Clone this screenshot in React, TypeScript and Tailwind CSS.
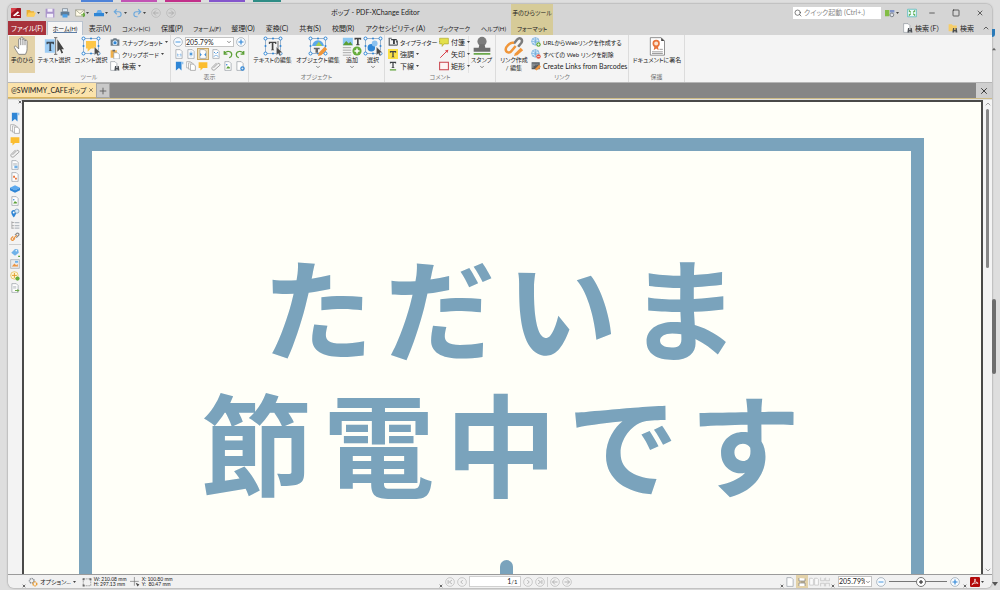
import React from "react";
import { ChevronDown, ChevronUp, Minus, Plus, Search, Square, X } from "lucide-react";

type Drawing = Record<string, React.ReactNode>;

const page = (
  <path d="M3 1h7l3 3v11H3z" fill="#fdfdfd" stroke="#8b949c" strokeWidth="1" />
);

const handles = (
  <>
    <rect x="3" y="3" width="18" height="18" fill="none" stroke="#8aa6c2" strokeWidth="1" />
    {[3, 21].map((x) =>
      [3, 21].map((y) => (
        <circle key={`${x}-${y}`} cx={x} cy={y} r="1.8" fill="#fff" stroke="#2f86d6" strokeWidth="1.2" />
      ))
    )}
    <circle cx="12" cy="3" r="1.2" fill="#2f86d6" />
    <circle cx="3" cy="12" r="1.2" fill="#2f86d6" />
    <circle cx="21" cy="12" r="1.2" fill="#2f86d6" />
    <circle cx="12" cy="21" r="1.2" fill="#2f86d6" />
  </>
);

const pointer = <path d="M16 13v10l2.4-2 1.6 3 1.8-.8-1.600-3 3.200-.4z" fill="#4a4a4a" stroke="#fff" strokeWidth=".5" />;

const small: Drawing = {
  app: (
    <>
      <rect width="16" height="16" rx="1" fill="#9e1623" />
      <path d="M0 0h10L0 9z" fill="#d8404a" />
      <path d="M3 12l8-7 2 2-7 6z" fill="#fff" />
      <path d="M9 12h5" stroke="#fff" strokeWidth="1.5" />
    </>
  ),
  folder: (
    <>
      <path d="M1 3h5l2 2h5v8H1z" fill="#e9ae33" />
      <path d="M4 7h12l-3 7H1z" fill="#fcce5c" />
    </>
  ),
  save: (
    <>
      <path d="M1 1h14v14H1z" fill="#a993cb" />
      <path d="M4 1h8v5H4zM3 9h10v6H3z" fill="#f3eefa" />
    </>
  ),
  print: (
    <>
      <path d="M4 1h8v5H4z" fill="#d9e9f7" stroke="#6b7780" />
      <path d="M1 6h14v6H1z" fill="#5f7c96" />
      <path d="M4 10h8v5H4z" fill="#4ea1e8" />
    </>
  ),
  mail: (
    <>
      <path d="M1 3h14v10H1z" fill="#fffbe8" stroke="#8d8d7a" />
      <path d="M1 3l7 6 7-6" fill="none" stroke="#8d8d7a" />
      <path d="M10 11h6M13 8l3 3-3 3" fill="none" stroke="#64a83a" strokeWidth="2" />
    </>
  ),
  scan: (
    <>
      <path d="M3 9l3-6h5l3 6z" fill="#6aaeea" />
      <path d="M0 8h16v5H0z" fill="#2f86d6" />
    </>
  ),
  undo: <path d="M6 2L2 6l4 4M2 6h7a4 4 0 010 8H7" fill="none" stroke="#6ea9dc" strokeWidth="1.8" />,
  redo: <path d="M10 2l4 4-4 4M14 6H7a4 4 0 000 8h2" fill="none" stroke="#6ea9dc" strokeWidth="1.8" />,
  back: (
    <>
      <circle cx="8" cy="8" r="7" fill="none" stroke="#b3b3b3" />
      <path d="M8 4L4 8l4 4M4 8h8" fill="none" stroke="#a6a6a6" strokeWidth="1.3" />
    </>
  ),
  forward: (
    <>
      <circle cx="8" cy="8" r="7" fill="none" stroke="#b3b3b3" />
      <path d="M8 4l4 4-4 4M12 8H4" fill="none" stroke="#a6a6a6" strokeWidth="1.3" />
    </>
  ),
  first: (
    <>
      <circle cx="8" cy="8" r="7" fill="none" stroke="#b3b3b3" />
      <path d="M11 5L7 8l4 3M5 5v6" fill="none" stroke="#a6a6a6" strokeWidth="1.3" />
    </>
  ),
  prev: (
    <>
      <circle cx="8" cy="8" r="7" fill="none" stroke="#b3b3b3" />
      <path d="M9 5L6 8l3 3" fill="none" stroke="#a6a6a6" strokeWidth="1.3" />
    </>
  ),
  next: (
    <>
      <circle cx="8" cy="8" r="7" fill="none" stroke="#b3b3b3" />
      <path d="M7 5l3 3-3 3" fill="none" stroke="#a6a6a6" strokeWidth="1.3" />
    </>
  ),
  last: (
    <>
      <circle cx="8" cy="8" r="7" fill="none" stroke="#b3b3b3" />
      <path d="M5 5l4 3-4 3M11 5v6" fill="none" stroke="#a6a6a6" strokeWidth="1.3" />
    </>
  ),
  zoomOut: (
    <>
      <circle cx="8" cy="8" r="7" fill="#f7fbff" stroke="#8c9aa6" />
      <path d="M4 8h8" stroke="#4d9be0" strokeWidth="1.6" />
    </>
  ),
  zoomIn: (
    <>
      <circle cx="8" cy="8" r="7" fill="#f7fbff" stroke="#8c9aa6" />
      <path d="M4 8h8M8 4v8" stroke="#2f86d6" strokeWidth="1.8" />
    </>
  ),
  camera: (
    <>
      <path d="M1 4h3l2-2h4l2 2h3v10H1z" fill="#6d7a85" />
      <circle cx="8" cy="9" r="4" fill="#cfe5f8" />
      <circle cx="8" cy="9" r="2.4" fill="#2f86d6" />
    </>
  ),
  clipboard: (
    <>
      <path d="M1 2h10v12H1z" fill="#efaf4a" />
      <path d="M4 1h4v3H4z" fill="#6b6b6b" />
      <path d="M6 6h6l3 3v7H6z" fill="#fff" stroke="#8b949c" />
    </>
  ),
  find: (
    <>
      <path d="M1 1h7l3 3v11H1z" fill="#fff" stroke="#8b949c" />
      <path d="M7 15l1-7h2v3h2V8h2l1 7h-3v-2h-2v2z" fill="#4b4f54" />
    </>
  ),
  findFolder: (
    <>
      <path d="M1 2h5l2 2h6v9H1z" fill="#f6cd67" />
      <path d="M7 15l1-7h2v3h2V8h2l1 7h-3v-2h-2v2z" fill="#4b4f54" />
    </>
  ),
  actual: (
    <>
      {page}
      <path d="M5 8h1v4M8 8v1M8 11v1M10 8h1v4" stroke="#4d9be0" fill="none" />
    </>
  ),
  fitPage: (
    <>
      {page}
      <path d="M8 4v8M5 8h6M6 6l4 4M10 6l-4 4" stroke="#2f86d6" />
    </>
  ),
  fitWidth: (
    <>
      {page}
      <path d="M5 9h1M10 9h1M4 7v4M12 7v4" stroke="#2f86d6" strokeWidth="1.4" />
    </>
  ),
  fitVisible: (
    <>
      {page}
      <path d="M5 5l2 2M11 5L9 7M5 12l2-2M11 12l-2-2" stroke="#2f86d6" strokeWidth="1.6" />
    </>
  ),
  rotateLeft: <path d="M2 3v5h5M2 8c3-6 12-5 12 1 0 3-2 4-4 5" fill="none" stroke="#5b9f35" strokeWidth="2" />,
  rotateRight: <path d="M14 3v5H9M14 8C11 2 2 3 2 9c0 3 2 4 4 5" fill="none" stroke="#5b9f35" strokeWidth="2" />,
  bookmark: (
    <>
      <path d="M3 1h9v14l-4-4-5 4z" fill="#2f86d6" />
      <path d="M12 1h3v4h-3z" fill="#8fc2ef" />
    </>
  ),
  pages: (
    <>
      <path d="M1 1h6l2 2v8H1z" fill="#fff" stroke="#9a9a9a" />
      <path d="M4 3h6l2 2v8H4z" fill="#fff" stroke="#9a9a9a" />
      <path d="M7 5h5l3 3v7H7z" fill="#fff" stroke="#8a8a8a" />
    </>
  ),
  note: <path d="M1 2h14v9H8l-4 4v-4H1z" fill="#fbbd2f" />,
  clip: (
    <path d="M4 11l7-7c2-1 4 1 3 3l-8 7c-3 2-6-1-4-4l7-7" fill="none" stroke="#979797" strokeWidth="1.4" />
  ),
  thumb: (
    <>
      {page}
      <path d="M5 12l3-4 2 2 1-1v3z" fill="#5b9f35" />
      <circle cx="6" cy="6" r="1.2" fill="#2f86d6" />
    </>
  ),
  pageGear: (
    <>
      {page}
      <circle cx="12" cy="12" r="2.6" fill="none" stroke="#2f86d6" strokeWidth="2" />
    </>
  ),
  fields: (
    <>
      {page}
      <path d="M5 6h6M5 8h6" stroke="#9aa3ab" />
      <path d="M7 9h5v4H7z" fill="#71b0e6" />
    </>
  ),
  signature: (
    <>
      {page}
      <path d="M5 6h3v3H5zM8 9h3v3H8z" fill="#e8743b" />
    </>
  ),
  layers: (
    <>
      <path d="M8 2l8 4-8 4-8-4z" fill="#5aa8ee" />
      <path d="M0 6v4l8 4 8-4V6l-8 4z" fill="#2f86d6" />
    </>
  ),
  pins: (
    <>
      <path d="M6 3a4 4 0 014 4c0 3-4 8-4 8S2 10 2 7a4 4 0 014-4z" fill="#2f86d6" />
      <circle cx="6" cy="7" r="1.6" fill="#fff" />
      <circle cx="11" cy="5" r="3.4" fill="#d6eafa" stroke="#5f86a8" />
    </>
  ),
  tree: (
    <>
      <path d="M3 2v12M3 4h4M3 9h4M3 13h4" stroke="#8b8b8b" fill="none" />
      <path d="M8 3h7v2H8zM8 8h7v2H8zM8 12h7v2H8z" fill="#b5bbc1" />
    </>
  ),
  chain: (
    <>
      <path d="M8 10l-3 3c-2 1-4-1-3-3l3-3" fill="none" stroke="#ec9440" strokeWidth="2" />
      <path d="M8 5l3-3c2-1 4 1 3 3l-4 4" fill="none" stroke="#8b8b8b" strokeWidth="2" />
      <path d="M5 11l6-6" stroke="#ec9440" strokeWidth="2" />
    </>
  ),
  tag: (
    <>
      <path d="M2 9l6-6 5 1 1 5-6 5z" fill="#6fb1e8" />
      <circle cx="10" cy="6" r="1.3" fill="#fff" />
      <path d="M13 14h3v2h-3z" fill="#5b9f35" />
    </>
  ),
  content: (
    <>
      <path d="M1 1h14v14H1z" fill="#e8eaec" stroke="#9da4aa" />
      <path d="M3 12l4-5 3 3 2-2 1 4z" fill="#ec9440" />
      <path d="M8 3h5v3H8z" fill="#6fb1e8" />
    </>
  ),
  addCircle: (
    <>
      <circle cx="7" cy="7" r="6" fill="#fff7d8" stroke="#e0b23a" />
      <path d="M7 3v8M3 7h8" stroke="#e09b2a" strokeWidth="1.5" />
      <circle cx="12" cy="12" r="3.4" fill="#67ad3d" />
    </>
  ),
  exportPage: (
    <>
      {page}
      <path d="M5 6h5M5 8h5" stroke="#9aa3ab" />
      <path d="M8 12h6M12 10l2 2-2 2" stroke="#5b9f35" strokeWidth="1.4" fill="none" />
    </>
  ),
  typewriter: (
    <>
      <path d="M1 2h2v10h12v2H1z" fill="#5c6166" />
      <path d="M5 3h9v2h-3v6H8V5H5z" fill="#3c4044" />
      <path d="M1 2h5M13 6h2v7" stroke="#5c6166" strokeWidth="1.5" />
    </>
  ),
  highlight: (
    <>
      <path d="M0 0h16v16H0z" fill="#fbe046" />
      <path d="M3 3h10v3h-1l-1-1H9v7l2 1H5l2-1V5H5L4 6H3z" fill="#3c4044" />
    </>
  ),
  underline: (
    <>
      <path d="M3 1h10v3h-1l-1-1H9v7l2 1H5l2-1V3H5L4 4H3z" fill="#3c4044" />
      <path d="M3 14h10" stroke="#5b9f35" strokeWidth="2" />
    </>
  ),
  sticky: <path d="M1 2h14v9H8l-3 4v-4H1z" fill="#e3e04a" stroke="#a8a42c" />,
  arrow: (
    <>
      <path d="M2 14L13 3" stroke="#d9404a" strokeWidth="1.6" />
      <path d="M15 1l-1.500 5.500-4-4z" fill="#d9404a" />
    </>
  ),
  rect: <rect x="1" y="2" width="14" height="12" fill="#fdf4f4" stroke="#c9404a" strokeWidth="1.6" />,
  globeAdd: (
    <>
      <circle cx="7" cy="7" r="6" fill="#e3f1fc" stroke="#5c9fd6" />
      <path d="M1 7h12M7 1v12M3 3c3 3 6 3 8 0M3 11c3-3 6-3 8 0" fill="none" stroke="#5c9fd6" />
      <circle cx="12" cy="12" r="3.6" fill="#67ad3d" />
      <path d="M10 12h4M12 10v4" stroke="#fff" />
    </>
  ),
  globeDel: (
    <>
      <circle cx="7" cy="7" r="6" fill="#e3f1fc" stroke="#5c9fd6" />
      <path d="M1 7h12M7 1v12M3 3c3 3 6 3 8 0M3 11c3-3 6-3 8 0" fill="none" stroke="#5c9fd6" />
      <circle cx="12" cy="12" r="3.6" fill="#e35a4a" />
      <path d="M10 12h4" stroke="#fff" />
    </>
  ),
  barcode: (
    <>
      <path d="M1 2h13v11H1z" fill="#565b60" />
      <path d="M3 4v7M5 4v4M8 4v3M11 4v2" stroke="#cfd4d8" />
      <path d="M6 13l7-7 3 3-7 6z" fill="#ec9440" />
    </>
  ),
  uiOptions: (
    <>
      <path d="M0 3h7v10H0z" fill="#83bd45" />
      <path d="M8 3h7v4H8z" fill="#7f93c9" />
      <circle cx="11" cy="11" r="3" fill="#dfe3ea" stroke="#7a7f86" strokeWidth="1.5" />
    </>
  ),
  fullScreen: (
    <>
      <path d="M1 2h14v12H1z" fill="#eafafa" stroke="#35b0b0" />
      <path d="M3 4l3 3M13 4l-3 3M3 12l3-3M13 12l-3-3" stroke="#55a845" strokeWidth="2" />
    </>
  ),
  gears: (
    <>
      <circle cx="6" cy="6" r="3.6" fill="none" stroke="#8a8f94" strokeWidth="2.4" strokeDasharray="2 1" />
      <circle cx="11" cy="11" r="3" fill="none" stroke="#ec9f36" strokeWidth="2.4" strokeDasharray="2 1" />
    </>
  ),
  dims: (
    <>
      <path d="M2 3h12v11H2z" fill="none" stroke="#7a7a7a" strokeDasharray="3 1" />
      <path d="M1 2h3v3H1zM12 2h3v3h-3zM1 12h3v3H1z" fill="#6a6a6a" />
    </>
  ),
  cross: (
    <>
      <path d="M7 0v14M0 7h14" stroke="#6a6a6a" />
      <path d="M9 9l6 3-3 3z" fill="#4a4a4a" />
    </>
  ),
  single: page,
  continuous: (
    <>
      <path d="M2 0v6h12V1M2 16v-6h12v6" fill="#fff" stroke="#6d6d6d" strokeWidth="1.2" />
      <path d="M6 8h8" stroke="#6d6d6d" />
    </>
  ),
  facing: <path d="M1 2h4l2 2v9H1zM9 2h4l2 2v9H9z" fill="#fafafa" stroke="#b9b9b9" />,
  facingCont: <path d="M1 1v5h6V2M9 1v5h6V2M1 15v-5h6v5M9 15v-5h6v5" fill="none" stroke="#b9b9b9" />,
  acrobat: (
    <>
      <rect width="16" height="16" rx="2" fill="#b30b0b" />
      <path d="M3 12c3-1 5-5 5-9 0 4 2 6 5 7-4-1-7 0-10 2z" fill="none" stroke="#fff" strokeWidth="1.2" />
    </>
  ),
};

const large: Drawing = {
  hand: (
    <path
      d="M8 22c-2-3-4-6-5-8-1-1.600 1-2.600 2.300-1.200L8 15.500V4.500c0-1.800 2.500-1.800 2.500 0V2.500c0-1.800 2.600-1.800 2.600 0v2c0-1.800 2.500-1.600 2.500 0V6c.2-1.500 2.500-1.400 2.500.2V15c0 3-1 5-2 7zM10.500 4.500V11M13.100 4V11M15.600 5v6"
      fill="#fff"
      stroke="#777"
      strokeWidth="1"
    />
  ),
  textSelect: (
    <>
      <path d="M1 4h12v16H1z" fill="#9ecdf5" />
      <path d="M3 7h9v3h-1l-1-1H8.500v8l1 1h-4l1-1V9H5l-1 1H3z" fill="#3c4a58" />
      <path d="M14 2v20M12 2h4M12 22h4" stroke="#5a5a5a" />
      <path d="M16 4v15l3-3 2 5 2-1-2-4h3z" fill="#444" />
    </>
  ),
  commentSelect: (
    <>
      {handles}
      <path d="M6 6h12v9h-6l-4 4v-4H6z" fill="#fdc647" />
      {pointer}
    </>
  ),
  editText: (
    <>
      {handles}
      <path d="M7 7h9v2.500h-1L14 8.500h-1.500V16l1 1h-4l1-1V8.500H9L8 9.500H7z" fill="#444" />
      <path d="M18 6v11" stroke="#555" />
      {pointer}
    </>
  ),
  editObject: (
    <>
      {handles}
      <path d="M5 12a7 7 0 0114 0z" fill="#5aa8e8" />
      <path d="M9 12l4-5 4 5z" fill="#a5cf4a" />
      <path d="M7 14h7v2h-2v4h-3v-4H7z" fill="#666" />
      <path d="M13 20l7-7 3 3-7 7-4 1z" fill="#f0963a" />
    </>
  ),
  add: (
    <>
      <path d="M1 2h12v9H1z" fill="#8cc8f2" />
      <path d="M1 11l4-5 3 3 2-2 3 4z" fill="#5b9f35" />
      <path d="M15 2h8v2.500h-1L21 4h-1v6h1v1h-4v-1h1V4h-1l-1 .5h-1z" fill="#444" />
      <path d="M1 14h10M1 17h10M1 20h10M1 23h10" stroke="#9a9a9a" />
      <circle cx="18" cy="18" r="5.500" fill="#67ad3d" />
      <path d="M15 18h6M18 15v6" stroke="#fff" strokeWidth="1.8" />
    </>
  ),
  select: (
    <>
      {handles}
      <circle cx="10" cy="14" r="4.500" fill="#2f86d6" />
      <circle cx="14" cy="9" r="3.500" fill="#8cc2f0" />
      {pointer}
    </>
  ),
  stamp: (
    <>
      <circle cx="12" cy="6.500" r="5.500" fill="#7c7c7c" />
      <path d="M9 10h6l1 4h6v5H2v-5h6z" fill="#6e6e6e" />
      <path d="M2 21.500h20" stroke="#6aa84a" strokeWidth="2" />
    </>
  ),
  link: (
    <>
      <path d="M12 9l4-5c3-3 7 0 5 4l-4 5" fill="none" stroke="#7c7c7c" strokeWidth="3" />
      <path d="M12 8l-2 0c-3 0-8 5-8 8 0 4 5 5 7 2l5-6" fill="none" stroke="#f0963a" strokeWidth="3" />
      <path d="M13 21l7-7 3 3-7 6-4 1z" fill="#f0963a" />
    </>
  ),
  sign: (
    <>
      <path d="M4 2h13l4 4v17H4z" fill="#fff" stroke="#7c7c7c" />
      <path d="M17 2v4h4" fill="#444" />
      <circle cx="11" cy="9" r="3.400" fill="#fbe3d0" stroke="#e8743b" strokeWidth="2" />
      <path d="M9 12l-1 5 3-2 3 2-1-5z" fill="#e8743b" />
      <path d="M6 19h13M15 16h4M6 21h13" stroke="#8a8a8a" />
    </>
  ),
};

const Icon = ({ name, className = "size-2.5" }: { name: string; className?: string }) => (
  <svg viewBox="0 0 16 16" aria-hidden="true" className={`shrink-0 ${className}`}>
    {small[name]}
  </svg>
);

const Caret = () => (
  <svg viewBox="0 0 6 4" aria-hidden="true" className="w-[3px] h-[2px] shrink-0">
    <path d="M0 0h6L3 4z" fill="#444" />
  </svg>
);

const IconButton = ({ name, label }: { name: string; label: string }) => (
  <button type="button" aria-label={label} className="flex items-center justify-center">
    <Icon name={name} />
  </button>
);

const Split = ({ name, label }: { name: string; label: string }) => (
  <button type="button" aria-label={label} className="flex items-center gap-px">
    <Icon name={name} />
    <Caret />
  </button>
);

const Group = ({ title, className, children }: { title: string; className: string; children: React.ReactNode }) => (
  <section aria-label={title} className={`flex flex-col shrink-0 border-r border-[#dcdcdc] ${className}`}>
    <div className="flex flex-1 px-px pt-px">{children}</div>
    <div className="h-[9px] text-center text-[6px] leading-[8px] text-[#777]">{title}</div>
  </section>
);

const BigButton = ({
  icon,
  label,
  className,
  active,
  menu,
}: {
  icon: string;
  label: React.ReactNode;
  className: string;
  active?: boolean;
  menu?: boolean;
}) => (
  <button
    type="button"
    className={`flex flex-col items-center shrink-0 whitespace-nowrap text-[6px] leading-[8px] ${
      active ? "bg-[#e3d2a9]" : ""
    } ${className}`}
  >
    <svg viewBox="0 0 24 24" aria-hidden="true" className="size-5 shrink-0">
      {large[icon]}
    </svg>
    <span>{label}</span>
    {menu && <ChevronDown className="size-1.5" />}
  </button>
);

const RowButton = ({
  icon,
  label,
  menu,
  className = "",
}: {
  icon: string;
  label: string;
  menu?: boolean;
  className?: string;
}) => (
  <button type="button" className={`flex items-center gap-0.5 h-3 whitespace-nowrap ${className}`}>
    <Icon name={icon} />
    <span>{label}</span>
    {menu && <Caret />}
  </button>
);

const Grip = () => (
  <button type="button" aria-label="閉じる" className="flex self-stretch items-end w-1">
    <X className="size-1" strokeWidth={4} />
  </button>
);

const tabs = [
  { label: "表示(V)" },
  { label: "コメント(C)", kana: true },
  { label: "保護(P)" },
  { label: "フォーム(F)", kana: true },
  { label: "整理(O)" },
  { label: "変換(C)" },
  { label: "共有(S)" },
  { label: "校閲(R)" },
  { label: "アクセシビリティ（A）" },
  { label: "ブックマーク", kana: true },
  { label: "ヘルプ(H)", kana: true },
];

const zoomRowOne = ["actual", "fitPage", "fitWidth", "fitVisible", "rotateLeft", "rotateRight"];
const zoomRowTwo = ["bookmark", "pages", "note", "clip", "thumb", "pageGear"];

const panes = [
  "bookmark",
  "pages",
  "note",
  "clip",
  "fields",
  "signature",
  "layers",
  "thumb",
  "pins",
  "tree",
  "chain",
];
const morePanes = ["tag", "content", "addCircle", "exportPage"];

const Header = () => (
  <header className="flex h-[31px] shrink-0 bg-[#d5d5d5]">
    <div className="flex flex-col w-[503px] shrink-0">
      <div className="flex items-center h-[17px] pl-[3px]">
        <div className="flex items-center gap-[5px] w-80">
          <Icon name="app" />
          <Split name="folder" label="開く" />
          <IconButton name="save" label="保存" />
          <IconButton name="print" label="印刷" />
          <Split name="mail" label="メール" />
          <Split name="scan" label="スキャン" />
          <Split name="undo" label="元に戻す" />
          <Split name="redo" label="やり直し" />
          <IconButton name="back" label="前の表示" />
          <IconButton name="forward" label="次の表示" />
        </div>
        <h1 className="whitespace-nowrap">ポップ - PDF-XChange Editor</h1>
      </div>
      <nav className="grid grid-cols-[38px_38px_32px_40px_32px_38px_34px_34px_32px_34px_72px_44px_35px] h-[14px] leading-[13px] whitespace-nowrap">
        <button type="button" className="bg-[#a8323c] text-white">
          ファイル(F)
        </button>
        <button type="button" className="mx-px bg-[#f5f5f5] border border-b-0 border-[#b9c3cf] text-[6px]">
          <span className="border-b border-[#5d7ea6]">ホーム(H)</span>
        </button>
        {tabs.map(({ label, kana }) => (
          <button type="button" key={label} className={`text-center ${kana ? "text-[6px]" : ""}`}>
            {label}
          </button>
        ))}
      </nav>
    </div>
    <div className="flex flex-col w-[42px] shrink-0 bg-[#d6cb98] text-[6px] whitespace-nowrap">
      <span className="h-[17px] text-center leading-[17px]">手のひらツール</span>
      <button type="button" className="h-[14px] leading-[13px]">
        フォーマット
      </button>
    </div>
    <div className="flex flex-col flex-1">
      <div className="flex items-center justify-end h-[17px]">
        <label className="flex items-center gap-0.5 w-[88px] h-3 px-px mr-1 bg-white text-[#777]">
          <Search className="size-2 shrink-0 text-[#444]" />
          <input
            type="text"
            aria-label="クイック起動"
            placeholder="クイック起動 (Ctrl+.)"
            className="w-full min-w-0 outline-none placeholder:text-[#888]"
          />
        </label>
        <div className="flex items-center justify-between w-8 mr-[3px]">
          <Split name="uiOptions" label="UI オプション" />
          <IconButton name="fullScreen" label="全画面" />
        </div>
        <button type="button" aria-label="最小化" className="flex justify-center w-6">
          <Minus className="size-2" />
        </button>
        <button type="button" aria-label="最大化" className="flex justify-center w-6">
          <Square className="size-2" />
        </button>
        <button type="button" aria-label="閉じる" className="flex justify-center w-6">
          <X className="size-2" />
        </button>
      </div>
      <div className="flex items-center justify-end gap-2 h-[14px] pr-0.5">
        <RowButton icon="find" label="検索（F）" />
        <RowButton icon="findFolder" label="検索" />
        <button type="button" aria-label="リボンを折りたたむ">
          <ChevronUp className="size-2" />
        </button>
      </div>
    </div>
  </header>
);

const Ribbon = () => (
  <div className="flex h-12 shrink-0 bg-[#f4f4f4] border-b border-[#b5b5b5]">
    <Group title="ツール" className="w-[163px]">
      <BigButton icon="hand" label="手のひら" className="w-[26px]" active />
      <BigButton icon="textSelect" label="テキスト選択" className="w-[38px]" />
      <BigButton icon="commentSelect" label="コメント選択" className="w-9" />
      <div className="flex flex-col pl-px">
        <RowButton icon="camera" label="スナップショット" menu className="text-[6px]" />
        <RowButton icon="clipboard" label="クリップボード" menu className="text-[6px]" />
        <RowButton icon="find" label="検索" menu />
      </div>
    </Group>

    <Group title="表示" className="w-[78px]">
      <div className="flex flex-col flex-1 px-px">
        <div className="flex items-center justify-between h-3">
          <IconButton name="zoomOut" label="縮小" />
          <div className="flex items-center w-[49px] h-[10px] bg-white border border-[#c4c4c4]">
            <select aria-label="ズーム" className="flex-1 min-w-0 appearance-none leading-[8px] outline-none">
              <option>205.79%</option>
            </select>
            <ChevronDown className="size-1.5 mr-px" />
          </div>
          <IconButton name="zoomIn" label="拡大" />
        </div>
        {[zoomRowOne, zoomRowTwo].map((row, i) => (
          <div key={i} className="flex items-center justify-between h-3">
            {row.map((name) => (
              <button
                type="button"
                key={name}
                aria-label={name}
                className={`flex items-center justify-center size-3 ${
                  name === "fitWidth" ? "bg-[#f0dcae] border border-[#c9a968]" : ""
                }`}
              >
                <Icon name={name} />
              </button>
            ))}
          </div>
        ))}
      </div>
    </Group>

    <Group title="オブジェクト" className="w-[136px]">
      <BigButton icon="editText" label="テキストの編集" className="w-[45px]" />
      <BigButton icon="editObject" label="オブジェクト編集" className="w-[46px]" menu />
      <BigButton icon="add" label="追加" className="w-[22px]" menu />
      <BigButton icon="select" label="選択" className="w-5" menu />
    </Group>

    <Group title="コメント" className="w-[111px]">
      <div className="flex flex-col w-[53px] pl-0.5">
        <RowButton icon="typewriter" label="タイプライター" menu className="text-[6px]" />
        <RowButton icon="highlight" label="強調" menu />
        <RowButton icon="underline" label="下線" menu />
      </div>
      <div className="flex flex-col w-[30px] border-r border-[#e2e2e2]">
        <RowButton icon="sticky" label="付箋" menu />
        <RowButton icon="arrow" label="矢印" menu />
        <RowButton icon="rect" label="矩形" menu />
      </div>
      <BigButton icon="stamp" label="スタンプ" className="w-[25px]" menu />
    </Group>

    <Group title="リンク" className="w-[133px]">
      <BigButton
        icon="link"
        label={
          <>
            リンク作成
            <br />/ 編集
          </>
        }
        className="w-[34px]"
      />
      <div className="flex flex-col">
        <RowButton icon="globeAdd" label="URLからWebリンクを作成する" className="text-[6px]" />
        <RowButton icon="globeDel" label="すべての Web リンクを削除" className="text-[6px]" />
        <RowButton icon="barcode" label="Create Links from Barcodes" />
      </div>
    </Group>

    <Group title="保護" className="w-14">
      <BigButton icon="sign" label="ドキュメントに署名" className="w-[54px]" />
    </Group>
  </div>
);

const DocumentTabs = () => (
  <div className="flex h-4 shrink-0 bg-[#868686] border-b border-[#cdbb86]">
    <div className="flex items-center w-[88px] pl-[3px] pr-0.5 bg-[#fbe3ab] border-b border-[#d9b25c] whitespace-nowrap">
      <span className="flex-1">@SWIMMY_CAFEポップ</span>
      <button type="button" aria-label="タブを閉じる">
        <X className="size-1.5" />
      </button>
    </div>
    <button type="button" aria-label="新しいタブ" className="flex items-center justify-center w-[14px] bg-[#c9c9c9] border border-[#a5a5a5]">
      <Plus className="size-2.5 text-[#555]" />
    </button>
    <button type="button" aria-label="文書を閉じる" className="flex items-center justify-center w-4 ml-auto bg-[#cfcfcf]">
      <X className="size-2.5" />
    </button>
  </div>
);

const SidePanes = () => (
  <aside className="flex flex-col items-center w-[14px] shrink-0 bg-[#f3f3f3]">
    <button type="button" aria-label="閉じる" className="flex self-end h-[11px]">
      <X className="size-1" strokeWidth={4} />
    </button>
    {panes.map((name) => (
      <button type="button" key={name} aria-label={name} className="flex items-center h-3">
        <Icon name={name} />
      </button>
    ))}
    <div className="w-3 h-px my-px bg-[#cfcfcf]" />
    {morePanes.map((name) => (
      <button type="button" key={name} aria-label={name} className="flex items-center h-3">
        <Icon name={name} />
      </button>
    ))}
  </aside>
);

const Poster = () => (
  <main className="flex flex-1 min-w-0 pl-[55px] pr-[57px] pt-9 overflow-hidden bg-[#fffff8] border-2 border-b-0 border-[#4a4a48]">
    <div className="flex flex-col flex-1 items-center justify-between pl-2.5 border-[13px] border-b-0 border-[#7aa3bc]">
      <p className="pt-[86px] text-center text-[111px] leading-[136px] font-bold tracking-widest whitespace-nowrap text-[#7aa3bc] font-['Noto_Sans_CJK_JP',sans-serif] [font-feature-settings:normal]">
        ただいま
        <br />
        節電中です
      </p>
      <div className="w-[13px] h-[14px] rounded-t-full bg-[#7aa3bc]" />
    </div>
  </main>
);

const StatusBar = () => (
  <footer className="grid grid-cols-[1fr_auto_1fr] h-[14px] shrink-0 pl-2.5 bg-[#f1f1f1] border-t border-[#9b9b9b]">
    <div className="flex items-center gap-0.5 pl-1 whitespace-nowrap">
      <Grip />
      <button type="button" className="flex items-center gap-0.5 mr-1 text-[6px]">
        <Icon name="gears" />
        オプション...
        <Caret />
      </button>
      <Icon name="dims" />
      <p className="w-[34px] text-[5px] leading-[5px]">
        W: 210.08 mm
        <br />
        H: 297.13 mm
      </p>
      <Icon name="cross" />
      <p className="text-[5px] leading-[5px]">
        X: 100.80 mm
        <br />
        Y: &nbsp;80.47 mm
      </p>
    </div>
    <div className="flex items-center gap-0.5">
      <Grip />
      <IconButton name="first" label="最初のページ" />
      <IconButton name="prev" label="前のページ" />
      <label className="flex items-center w-[52px] h-[11px] px-0.5 bg-white border border-[#d0d0d0]">
        <input type="text" aria-label="ページ" defaultValue="1" className="w-full min-w-0 text-right outline-none" />
        <span className="text-[6px]">/1</span>
      </label>
      <IconButton name="next" label="次のページ" />
      <IconButton name="last" label="最後のページ" />
      <div className="w-px h-2.5 bg-[#cfcfcf]" />
      <IconButton name="back" label="前の表示" />
      <IconButton name="forward" label="次の表示" />
    </div>
    <div className="flex items-center justify-end gap-[3px] pr-2">
      <div className="flex items-center gap-px h-full">
        <Grip />
        <IconButton name="single" label="単一ページ" />
        <button type="button" aria-label="連続" className="flex items-center justify-center w-3 h-[13px] bg-[#e3d2a9]">
          <Icon name="continuous" className="size-2" />
        </button>
        <IconButton name="facing" label="見開き" />
        <IconButton name="facingCont" label="連続見開き" />
        <Grip />
      </div>
      <div className="flex items-center w-[34px] h-[11px] bg-white border border-[#c4c4c4]">
        <select aria-label="ズーム" className="flex-1 min-w-0 appearance-none leading-[9px] outline-none">
          <option>205.79%</option>
        </select>
        <ChevronDown className="size-1.5 shrink-0" />
      </div>
      <div className="flex items-center gap-[3px] pl-px">
        <IconButton name="zoomOut" label="縮小" />
        <input
          type="range"
          aria-label="ズーム倍率"
          defaultValue={56}
          className="w-[58px] h-2.5 appearance-none bg-[linear-gradient(#777,#777)] bg-[length:100%_1px] bg-center bg-no-repeat [&::-webkit-slider-thumb]:appearance-none [&::-webkit-slider-thumb]:size-2.5 [&::-webkit-slider-thumb]:rounded-full [&::-webkit-slider-thumb]:border [&::-webkit-slider-thumb]:border-[#777] [&::-webkit-slider-thumb]:bg-[radial-gradient(#555_25%,#fff_35%)]"
        />
        <IconButton name="zoomIn" label="拡大" />
      </div>
      <Grip />
      <Split name="acrobat" label="Acrobat" />
    </div>
  </footer>
);

const App = () => {
  return (
    <div className="flex flex-col h-screen pb-0.5 overflow-hidden bg-[#dedede] text-[7px] leading-[9px] text-[#222] font-['Lato','Noto_Sans_CJK_JP',sans-serif] [font-feature-settings:'palt']">
      <div className="flex gap-2 h-1 shrink-0 pl-[81px]">
        <div className="w-8 h-0.5 bg-[#4f83d8]" />
        <div className="w-9 h-0.5 bg-[#c253b4]" />
        <div className="w-9 h-0.5 bg-[#c2308a]" />
        <div className="w-9 h-0.5 bg-[#8456cc]" />
        <div className="w-7 h-0.5 bg-[#2f8d86]" />
      </div>
      <div className="flex flex-1 min-h-0 pl-2">
        <div className="flex flex-col flex-1 min-w-0 rounded-md overflow-hidden shadow-[0_0_2px_#777]">
          <Header />
          <Ribbon />
          <DocumentTabs />
          <div className="flex flex-1 min-h-0 pt-px">
            <SidePanes />
            <Poster />
            <div className="flex flex-col items-center justify-between w-[9px] shrink-0 bg-[#f4f4f4]">
              <ChevronUp className="size-2 text-[#777]" />
              <div className="flex-1 pt-px">
                <div className="w-[3px] h-[159px] rounded-full bg-[#868686]" />
              </div>
              <ChevronDown className="size-2 text-[#777]" />
            </div>
          </div>
          <StatusBar />
        </div>
        <div className="flex flex-col w-2 shrink-0">
          <div className="w-[3px] h-2 mt-[25px] rounded-br bg-[#2a7ab8]" />
          <svg viewBox="0 0 6 4" aria-hidden="true" className="w-1 h-1 mt-2.5">
            <path d="M0 4h6L3 0z" fill="#666" />
          </svg>
          <div className="w-1 h-[75px] mt-62 rounded-full bg-[#6e6e6e]" />
          <svg viewBox="0 0 6 4" aria-hidden="true" className="w-1.5 h-1 mt-auto mb-0.5">
            <path d="M0 0h6L3 4z" fill="#555" />
          </svg>
        </div>
      </div>
    </div>
  );
};

export default App;
